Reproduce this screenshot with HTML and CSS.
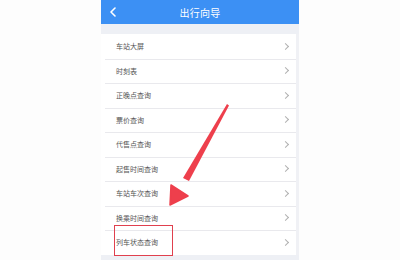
FILE: index.html
```html
<!DOCTYPE html>
<html lang="zh-CN">
<head>
  <meta charset="UTF-8">
  <title>出行向导</title>
  <link rel="stylesheet" href="styles.css">
</head>
<body>
  <div class="phone">
    <div class="header">
      <svg class="back" width="8" height="10" viewBox="0 0 8 10">
        <path d="M6 1 L2 5 L6 9" fill="none" stroke="#fff" stroke-width="1.6" stroke-linecap="round" stroke-linejoin="round"/>
      </svg>
      <div class="title">出行向导</div>
    </div>
    <div class="gap"></div>
    <ul class="menu">
      <li class="item"><span>车站大屏</span><i class="chev"></i></li>
      <li class="item"><span>时刻表</span><i class="chev"></i></li>
      <li class="item"><span>正晚点查询</span><i class="chev"></i></li>
      <li class="item"><span>票价查询</span><i class="chev"></i></li>
      <li class="item"><span>代售点查询</span><i class="chev"></i></li>
      <li class="item"><span>起售时间查询</span><i class="chev"></i></li>
      <li class="item"><span>车站车次查询</span><i class="chev"></i></li>
      <li class="item"><span>换乘时间查询</span><i class="chev"></i></li>
      <li class="item"><span class="marked">列车状态查询</span><i class="chev"></i></li>
    </ul>
    <div class="gap"></div>

    <!-- annotation arrow drawn over the list -->
    <svg class="arrow" width="80" height="120" viewBox="0 0 80 120">
      <path d="M58 14 L60 15.5 L20 91 L14 88 Z" fill="#ee3f4c"/>
      <path d="M1 115 L2 95 L19 106 Z" fill="#ee3f4c" stroke="#ee3f4c" stroke-width="1.5" stroke-linejoin="round"/>
    </svg>
  </div>
</body>
</html>
```

FILE: styles.css
```css
* {
  margin: 0;
  padding: 0;
  box-sizing: border-box;
}

body {
  width: 400px;
  height: 260px;
  overflow: hidden;
  background: #fdfdfd;
  display: flex;
  justify-content: center;
  font-family: 'Noto Sans CJK SC', 'Noto Sans', sans-serif;
}

.phone {
  position: relative;
  width: 198px;
  background: #f0f1f5;
}

.header {
  height: 24px;
  background: #3c90f4;
  display: flex;
  align-items: center;
  justify-content: center;
  position: relative;
}

.back {
  position: absolute;
  left: 8px;
  top: 7px;
}

.title {
  color: #fff;
  font-size: 10px;
  letter-spacing: 0.3px;
}

.gap {
  height: 10px;
  background: #eef0f5;
}

.menu {
  list-style: none;
  background: #fff;
  margin-right: 3px;
}

.item {
  height: 24.5px;
  display: flex;
  align-items: center;
  justify-content: space-between;
  padding: 0 8px 0 15px;
  font-size: 7px;
  color: #555;
  position: relative;
}

.item + .item::before {
  content: "";
  position: absolute;
  left: 4px;
  right: 0;
  top: 0;
  border-top: 1px solid #e9e9ed;
}

.chev {
  width: 5px;
  height: 5px;
  border-top: 1px solid #b0b0b0;
  border-right: 1px solid #b0b0b0;
  transform: rotate(45deg);
}

.marked {
  position: relative;
}

.marked::after {
  content: "";
  position: absolute;
  left: -2px;
  right: -15px;
  top: -12px;
  bottom: -9px;
  border: 1.5px solid #e0404e;
}

.arrow {
  position: absolute;
  left: 68px;
  top: 90px;
}
```
